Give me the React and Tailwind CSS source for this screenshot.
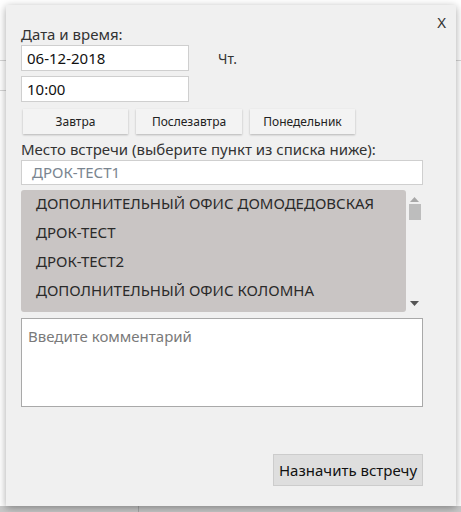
import React from 'react'

const places = [
  'ДОПОЛНИТЕЛЬНЫЙ ОФИС ДОМОДЕДОВСКАЯ',
  'ДРОК-ТЕСТ',
  'ДРОК-ТЕСТ2',
  'ДОПОЛНИТЕЛЬНЫЙ ОФИС КОЛОМНА',
  'ДОПОЛНИТЕЛЬНЫЙ ОФИС ЛЮБЕРЕЦКИЙ',
]

const QuickButton = ({ children, width }) => (
  <button className={`h-[25px] ${width} bg-[#f3f3f3] text-[12px] text-[#222] shadow-[0_1px_2px_rgba(0,0,0,0.25)]`}>
    {children}
  </button>
)

export default function App() {
  return (
    <div className="relative w-[461px] h-[512px] overflow-hidden bg-white" style={{ fontFamily: '"Noto Sans", "Open Sans", sans-serif' }}>
      {/* page behind the dialog */}
      <div className="absolute left-0 top-[60px] w-full h-px bg-[#d6d6d6]" />
      <div className="absolute left-0 top-[90px] w-[20px] h-px bg-[#d6d6d6]" />
      <div className="absolute left-0 top-[506px] w-full h-[6px] bg-[#c8c8c8]" />
      <div className="absolute left-[138px] top-[500px] w-px h-[12px] bg-[#a8a8a8]" />

      {/* dialog */}
      <div className="absolute left-[6px] top-[5px] w-[450px] h-[501px] bg-[#f0f0f0] shadow-[0_2px_8px_rgba(0,0,0,0.35)]">
        <div className="absolute right-[10px] top-[6px] text-[15px] text-[#333]">X</div>

        <div className="flex flex-col pl-[15px] pt-[19px] w-[417px]">
          <div className="text-[15px] leading-[20px] text-[#333]">Дата и время:</div>

          <div className="flex items-center mt-[1px]">
            <div className="w-[168px] h-[26px] border border-[#cfcfcf] bg-white px-[5px] text-[15px] leading-[24px] text-[#111]">06-12-2018</div>
            <div className="ml-[29px] text-[14px] text-[#333]">Чт.</div>
          </div>
          <div className="w-[168px] h-[26px] mt-[5px] border border-[#cfcfcf] bg-white px-[5px] text-[15px] leading-[24px] text-[#111]">10:00</div>

          <div className="flex gap-[8px] mt-[7px] pl-[2px]">
            <QuickButton width="w-[105px]">Завтра</QuickButton>
            <QuickButton width="w-[106px]">Послезавтра</QuickButton>
            <QuickButton width="w-[105px]">Понедельник</QuickButton>
          </div>

          <div className="mt-[5px] text-[15px] leading-[20px] text-[#333]">Место встречи (выберите пункт из списка ниже):</div>
          <div className="mt-[1px] h-[25px] border border-[#cfcfcf] bg-white px-[10px] text-[15px] leading-[22px] text-[#7a8590]">ДРОК-ТЕСТ1</div>

          <div className="flex mt-[5px] h-[122px]">
            <div className="w-[386px] h-full overflow-hidden rounded-[3px] bg-[#c9c5c4]">
              {places.map((p) => (
                <div key={p} className="h-[29px] pl-[15px] text-[15px] leading-[27px] text-[#2a2a2a] whitespace-nowrap">{p}</div>
              ))}
            </div>
            <div className="w-[17px] h-full flex flex-col items-center">
              <svg width="9" height="5" className="mt-[7px]" viewBox="0 0 9 5"><path d="M4.5 0L9 5H0z" fill="#a8a8a8" /></svg>
              <div className="mt-[2px] w-[12px] h-[16px] bg-[#bdbdbd]" />
              <div className="flex-1" />
              <svg width="9" height="5" className="mb-[6px]" viewBox="0 0 9 5"><path d="M0 0H9L4.5 5z" fill="#555" /></svg>
            </div>
          </div>

          <div className="mt-[6px] h-[89px] border border-[#a9a9a9] bg-white px-[6px] pt-[7px] text-[15px] leading-[20px] text-[#7a7a7a]">Введите комментарий</div>

          <div className="flex justify-end mt-[47px]">
            <button className="h-[32px] w-[150px] border border-[#cccccc] bg-[#dedede] text-[15px] text-[#111]">Назначить встречу</button>
          </div>
        </div>
      </div>
    </div>
  )
}
